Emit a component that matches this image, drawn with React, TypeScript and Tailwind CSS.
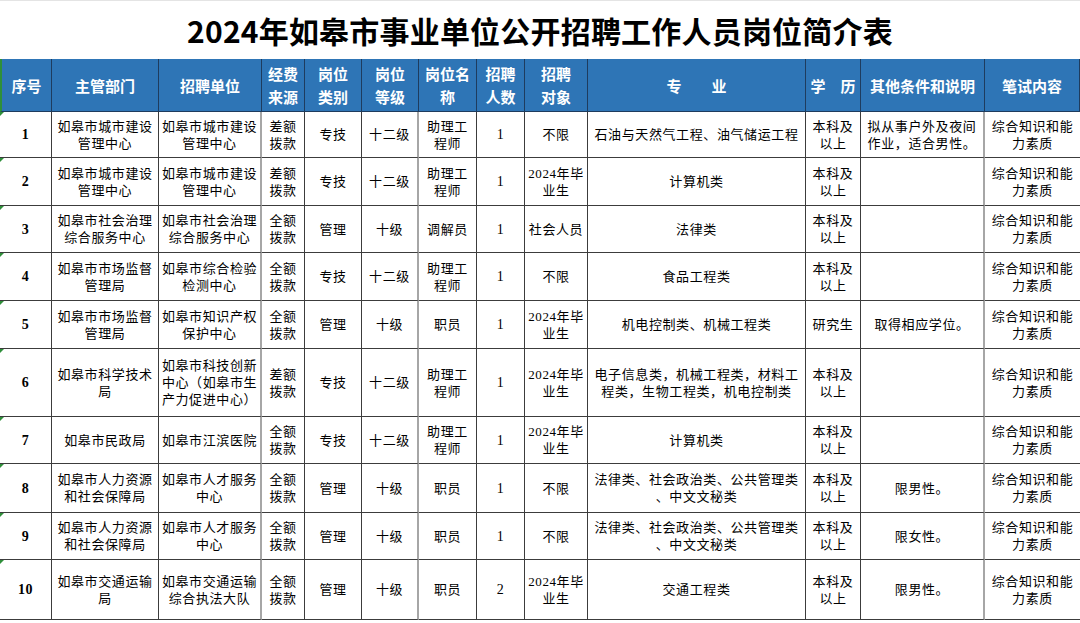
import React from "react"

type Row = {
  h: string
  cells: string[][]
}

const COLS = "grid grid-cols-[52px_107px_103px_43px_57px_57px_58px_48px_63px_218px_55px_124px_95px]"

// columns whose right edge is drawn in grey instead of black
const greyRight = [2, 5, 11]

const headers: string[][] = [
  ["序号"],
  ["主管部门"],
  ["招聘单位"],
  ["经费", "来源"],
  ["岗位", "类别"],
  ["岗位", "等级"],
  ["岗位名", "称"],
  ["招聘", "人数"],
  ["招聘", "对象"],
  ["专　　业"],
  ["学　历"],
  ["其他条件和说明"],
  ["笔试内容"],
]

const bishi = ["综合知识和能", "力素质"]
const benke = ["本科及", "以上"]
const grad = ["2024年毕", "业生"]
const zhuli = ["助理工", "程师"]

const rows: Row[] = [
  {
    h: "h-[46px]",
    cells: [["1"], ["如皋市城市建设", "管理中心"], ["如皋市城市建设", "管理中心"], ["差额", "拨款"], ["专技"], ["十二级"], zhuli, ["1"], ["不限"], ["石油与天然气工程、油气储运工程"], benke, ["拟从事户外及夜间", "作业，适合男性。"], bishi],
  },
  {
    h: "h-[48px]",
    cells: [["2"], ["如皋市城市建设", "管理中心"], ["如皋市城市建设", "管理中心"], ["差额", "拨款"], ["专技"], ["十二级"], zhuli, ["1"], grad, ["计算机类"], benke, [], bishi],
  },
  {
    h: "h-[47px]",
    cells: [["3"], ["如皋市社会治理", "综合服务中心"], ["如皋市社会治理", "综合服务中心"], ["全额", "拨款"], ["管理"], ["十级"], ["调解员"], ["1"], ["社会人员"], ["法律类"], benke, [], bishi],
  },
  {
    h: "h-[48px]",
    cells: [["4"], ["如皋市市场监督", "管理局"], ["如皋市综合检验", "检测中心"], ["全额", "拨款"], ["专技"], ["十二级"], zhuli, ["1"], ["不限"], ["食品工程类"], benke, [], bishi],
  },
  {
    h: "h-[48px]",
    cells: [["5"], ["如皋市市场监督", "管理局"], ["如皋市知识产权", "保护中心"], ["全额", "拨款"], ["管理"], ["十级"], ["职员"], ["1"], grad, ["机电控制类、机械工程类"], ["研究生"], ["取得相应学位。"], bishi],
  },
  {
    h: "h-[68px]",
    cells: [["6"], ["如皋市科学技术", "局"], ["如皋市科技创新", "中心（如皋市生", "产力促进中心）"], ["差额", "拨款"], ["专技"], ["十二级"], zhuli, ["1"], grad, ["电子信息类，机械工程类，材料工", "程类，生物工程类，机电控制类"], benke, [], bishi],
  },
  {
    h: "h-[47px]",
    cells: [["7"], ["如皋市民政局"], ["如皋市江滨医院"], ["全额", "拨款"], ["专技"], ["十二级"], zhuli, ["1"], grad, ["计算机类"], benke, [], bishi],
  },
  {
    h: "h-[49px]",
    cells: [["8"], ["如皋市人力资源", "和社会保障局"], ["如皋市人才服务", "中心"], ["全额", "拨款"], ["管理"], ["十级"], ["职员"], ["1"], ["不限"], ["法律类、社会政治类、公共管理类", "、中文文秘类"], benke, ["限男性。"], bishi],
  },
  {
    h: "h-[47px]",
    cells: [["9"], ["如皋市人力资源", "和社会保障局"], ["如皋市人才服务", "中心"], ["全额", "拨款"], ["管理"], ["十级"], ["职员"], ["1"], ["不限"], ["法律类、社会政治类、公共管理类", "、中文文秘类"], benke, ["限女性。"], bishi],
  },
  {
    h: "h-[60px]",
    cells: [["10"], ["如皋市交通运输", "局"], ["如皋市交通运输", "综合执法大队"], ["全额", "拨款"], ["管理"], ["十级"], ["职员"], ["2"], grad, ["交通工程类"], benke, ["限男性。"], bishi],
  },
]

function Lines({ lines }: { lines: string[] }) {
  return (
    <div>
      {lines.map((l, i) => (
        <div key={i} className="whitespace-nowrap">{l}</div>
      ))}
    </div>
  )
}

export default function App() {
  return (
    <div className="w-[1080px] h-[623px] bg-white overflow-hidden">
      <div className="h-[59px] border-t border-[#e4e4e4] flex items-center justify-center">
        <h1 className="text-[30px] font-bold text-black tracking-[0.2px] font-['Noto_Sans_CJK_SC',sans-serif] leading-none">
          2024年如皋市事业单位公开招聘工作人员岗位简介表
        </h1>
      </div>

      <div className={`${COLS} h-[53px] bg-[#2e75b6] text-white font-bold text-[15px] leading-[23px] font-['Noto_Sans_CJK_SC',sans-serif]`}>
        {headers.map((h, i) => (
          <div
            key={i}
            className={`flex items-center justify-center text-center border-r border-b border-[#1e3c5e] ${i === 0 ? "border-l-2 border-l-[#2f8f3a]" : ""}`}
          >
            <Lines lines={h} />
          </div>
        ))}
      </div>

      {rows.map((r, ri) => (
        <div
          key={ri}
          className={`${COLS} ${r.h} text-black text-[13px] leading-[17px] tracking-[0.6px] font-['Liberation_Serif','Noto_Sans_CJK_SC',serif]`}
        >
          {r.cells.map((c, ci) => (
            <div
              key={ci}
              className={`relative flex items-center justify-center text-center border-b border-[#3c3c3c] ${greyRight.includes(ci) ? "border-r-2 border-r-[#a6a6a6]" : ci === 12 ? "" : "border-r border-r-[#3c3c3c]"} ${ci === 0 || ci === 7 ? "text-[14px]" : ""} ${ci === 0 ? "font-bold" : ""}`}
            >
              {ci === 0 && (
                <span className="absolute left-0 top-0 w-0 h-0 border-t-[4px] border-r-[4px] border-t-[#2f8f3a] border-r-transparent" />
              )}
              <Lines lines={c} />
            </div>
          ))}
        </div>
      ))}
    </div>
  )
}
